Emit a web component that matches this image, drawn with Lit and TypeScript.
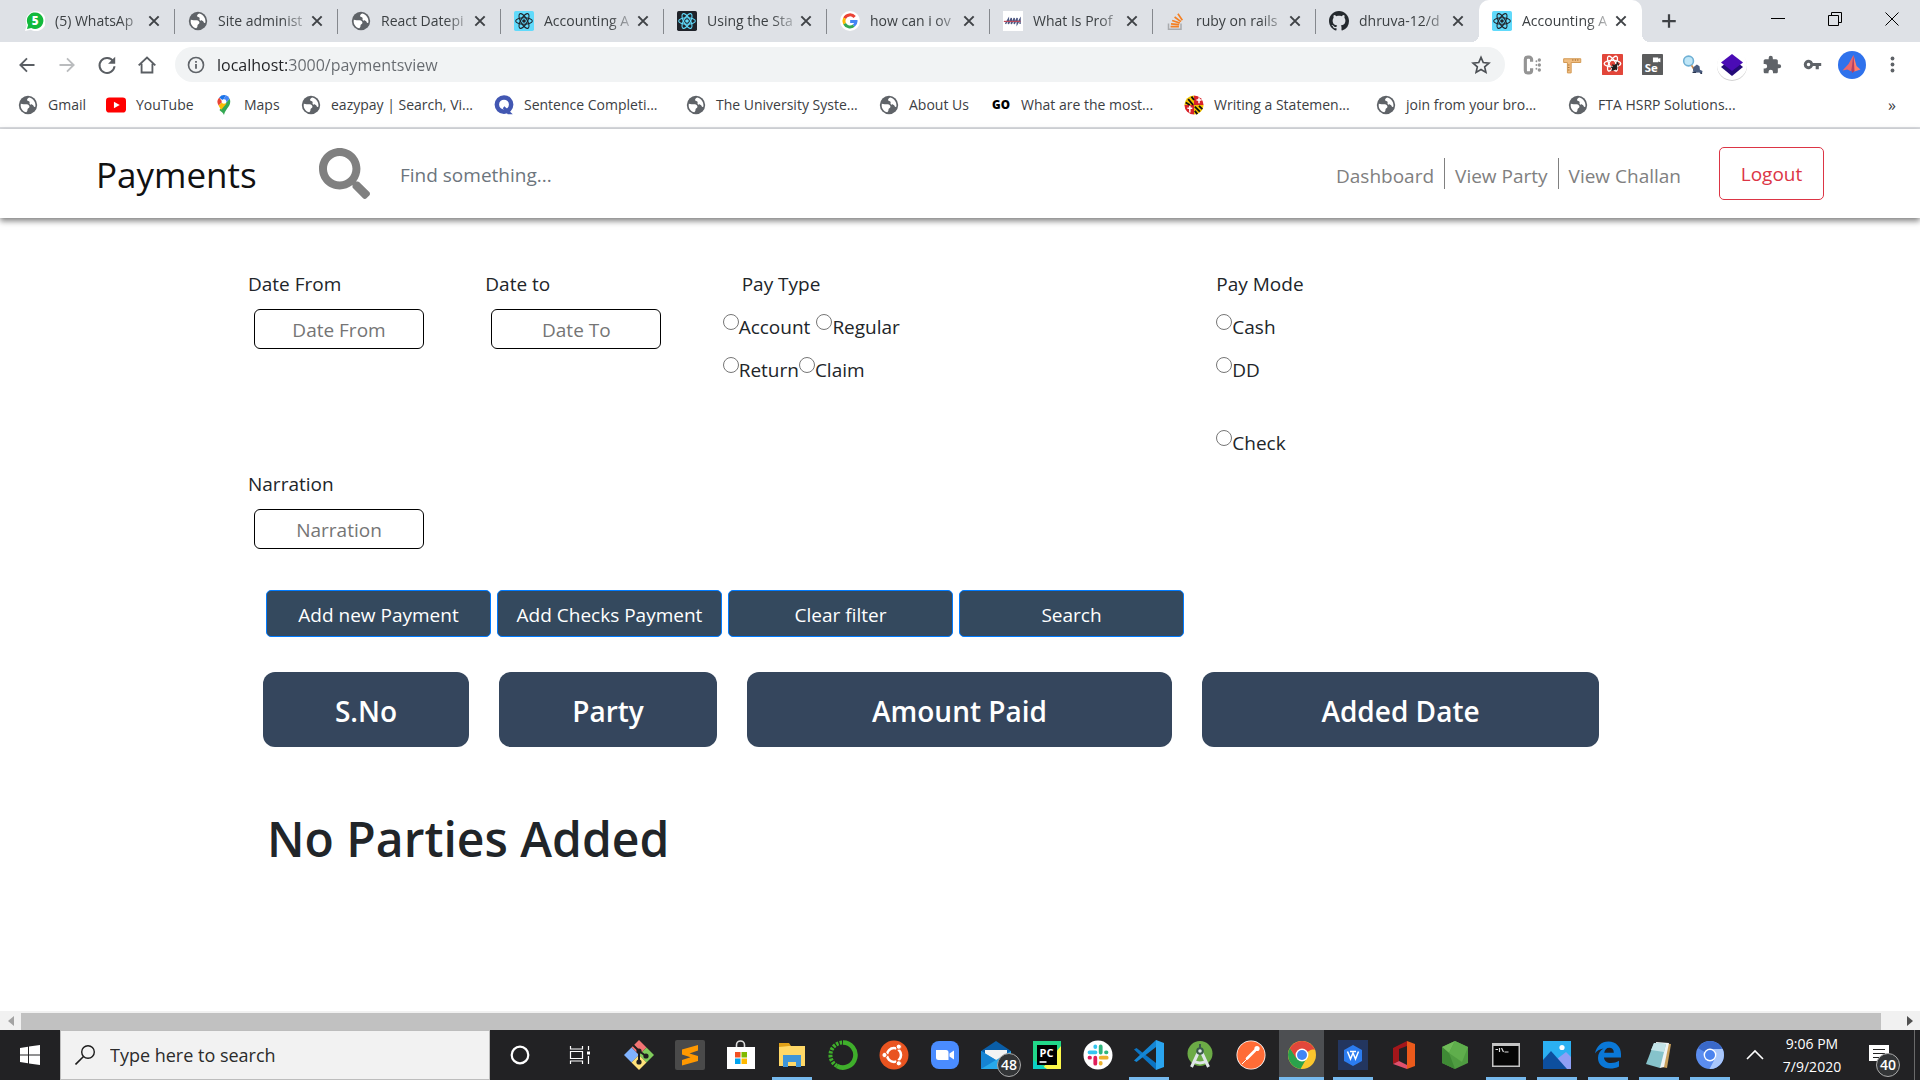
import { LitElement, html, css, svg, nothing, type TemplateResult } from "lit";
import { customElement } from "lit/decorators.js";
import { classMap } from "lit/directives/class-map.js";

type Art = { box?: number; body: unknown };

const reactArt = (bg: string, fg: string, core: string): Art => ({
  body: svg`<rect width="24" height="24" rx="2" fill=${bg}/>
    <g fill="none" stroke=${fg} stroke-width="1.3">
      <ellipse cx="12" cy="12" rx="10" ry="3.9"/>
      <ellipse cx="12" cy="12" rx="10" ry="3.9" transform="rotate(60 12 12)"/>
      <ellipse cx="12" cy="12" rx="10" ry="3.9" transform="rotate(120 12 12)"/>
    </g><circle cx="12" cy="12" r="2.2" fill=${core}/>`,
});

const art: Record<string, Art> = {
  globe: {
    body: svg`<circle cx="12" cy="12" r="11" fill="#5f6368"/>
      <path fill="#fff" d="M3.4 10.6c2.4.9 4.6.2 7 .6 2.2.4 3.600 1.500 3.300 3.200-.3 1.500-2.200 1.600-2.300 3.100 0 1.300-.2 2.300-1.400 3.300-4-1-6.900-4.500-6.800-8.600z"/>
      <path fill="#fff" d="M13.500 2.900c-1.800 1-2.900 1.800-2.600 3.200.3 1.500 2.300.9 2.900 2 .6 1.200-.5 2 .4 3 1.100 1 2.600.2 3.700 1 .9.700.7 2 1.700 2.300.6.1 1.100-.2 1.300-.6.700-4.600-2.300-9.600-7.400-10.900z"/>`,
  },
  whatsapp: {
    body: svg`<path fill="#fff" d="M0 24l2-7A12 12 0 1 1 7 22.600z"/><path fill="#12b93c" d="M2.300 21.700l1.400-5A9.900 9.900 0 1 1 7.500 20.300z"/>
      <text x="12.300" y="17" font-size="14" font-weight="800" font-family="Open Sans, sans-serif" fill="#fff" text-anchor="middle">5</text>`,
  },
  react: reactArt("#61dafb", "#20232a", "#20232a"),
  reactDark: reactArt("#20232a", "#61dafb", "#61dafb"),
  google: {
    body: svg`<circle cx="12" cy="12" r="12" fill="#fff"/><g fill="none" stroke-width="3.600">
      <path stroke="#ea4335" d="M17.600 7.200A7.300 7.300 0 0 0 5.500 8.700"/><path stroke="#fbbc05" d="M5.500 8.700a7.300 7.300 0 0 0 0 6.600"/>
      <path stroke="#34a853" d="M5.500 15.300a7.300 7.300 0 0 0 11 2.300"/><path stroke="#4285f4" d="M16.500 17.600c1.900-1.500 2.700-3.300 2.700-5.100H12.200"/></g>`,
  },
  hills: {
    body: svg`<rect width="24" height="24" fill="#fff"/><g fill="none" stroke="#4a5580" stroke-width="1.600"><path d="M3 15.500l3.500-6v6l3.500-7v7l3.500-7v7l3.500-7v7l3.500-6v6"/></g><path d="M1 12.500h20" stroke="#bb4a5c" stroke-width="1.400"/>`,
  },
  stack: {
    body: svg`<path d="M3 15v7h15v-7" fill="none" stroke="#a9abae" stroke-width="1.800"/>
      <g stroke="#f48024" stroke-width="2"><path d="M5.500 18.800h10M6 15.400l9.800 1M7.400 11.300l9.200 3.200M10.300 7.200l7.600 5.600M14.300 3.200l5.300 7.800"/></g>`,
  },
  github: {
    box: 16,
    body: svg`<path fill="#24292e" fill-rule="evenodd" d="M8 0C3.580 0 0 3.580 0 8c0 3.540 2.290 6.530 5.470 7.590.4.070.55-.17.55-.38 0-.19-.01-.82-.01-1.490-2.010.37-2.530-.49-2.690-.94-.09-.23-.48-.94-.82-1.130-.28-.15-.68-.52-.01-.53.63-.01 1.080.58 1.230.82.72 1.210 1.870.87 2.330.66.07-.52.28-.87.51-1.070-1.780-.2-3.640-.89-3.640-3.950 0-.87.31-1.590.82-2.150-.08-.2-.36-1.020.08-2.120 0 0 .67-.21 2.200.82.64-.18 1.320-.27 2-.27s1.360.09 2 .27c1.530-1.040 2.200-.82 2.200-.82.44 1.100.16 1.920.08 2.120.51.56.82 1.270.82 2.150 0 3.070-1.870 3.750-3.650 3.950.29.25.54.73.54 1.480 0 1.070-.01 1.930-.01 2.200 0 .21.15.46.55.38A8.010 8.010 0 0 0 16 8c0-4.420-3.580-8-8-8z"/>`,
  },
  youtube: { body: svg`<rect y="3" width="24" height="18" rx="4" fill="#f00"/><path fill="#fff" d="M9.500 8v8l7-4z"/>` },
  maps: {
    body: svg`<path fill="#34a853" d="M12 24c.8-3.500 2-5 4-8 1.500-2.200 3.500-4.400 3.500-8.200 0-1.300-.3-2.400-.8-3.400L6.500 18c2 2.500 4.600 2.800 5.500 6z"/>
      <path fill="#fbbc04" d="M5.500 12.500c.7 1.800 2 3.500 3.200 5.200l6.300-7.400-5-2z"/><path fill="#ea4335" d="M6.300 3A7.700 7.700 0 0 0 5.500 12.500L10 8z"/>
      <path fill="#1a73e8" d="M6.300 3l4.300 3.600L14.300.400A7.600 7.600 0 0 0 6.300 3z"/><path fill="#4285f4" d="M14.300.400a7.500 7.500 0 0 1 4.400 4L14.700 9 10.600 6.600z"/><circle cx="12" cy="7.800" r="2.800" fill="#fff"/>`,
  },
  quill: { body: svg`<circle cx="12" cy="11.500" r="8.600" fill="none" stroke="#4257b2" stroke-width="5.400"/><path d="M12.500 13.500l10 9.500h-6l-6-7z" fill="#4257b2"/>` },
  go: { body: svg`<text x="12" y="17" font-size="14" font-weight="900" font-family="Open Sans, sans-serif" fill="#000" text-anchor="middle">GO</text>` },
  maryland: {
    body: svg`<circle cx="12" cy="12" r="11.500" fill="#fff"/><path fill="#f5c400" d="M12 .5A11.500 11.500 0 0 0 .5 12H12z"/><path fill="#d8232a" d="M12 .5A11.500 11.500 0 0 1 23.500 12H12z"/>
      <path fill="#d8232a" d="M12 23.500A11.500 11.500 0 0 1 .5 12H12z"/><path fill="#f5c400" d="M12 23.500A11.500 11.500 0 0 0 23.500 12H12z"/>
      <path stroke="#111" stroke-width="2.200" d="M5 5l6 7M9 2l3 4M2 9l5 3M13 14l6 6M13 19l3 4M18 13l4 4"/><path stroke="#fff" stroke-width="1.800" d="M15 6h6M18 3v7M4 16h6M7 13v8"/>`,
  },
  back: { body: svg`<path d="M21 12H4M12 4l-8 8 8 8" fill="none" stroke="#5a5e63" stroke-width="2.200"/>` },
  forward: { body: svg`<path d="M3 12h17M12 4l8 8-8 8" fill="none" stroke="#babcbe" stroke-width="2.200"/>` },
  reload: { body: svg`<path d="M19.500 7.500A9 9 0 1 0 21 13.500" fill="none" stroke="#5a5e63" stroke-width="2.400"/><path d="M21.800 2v8.500h-8.500z" fill="#5a5e63"/>` },
  home: { body: svg`<path d="M2 12.500L12 3l10 9.500M5.500 10.500V21h13V10.500" fill="none" stroke="#5a5e63" stroke-width="2.200"/>` },
  info: { body: svg`<circle cx="12" cy="12" r="10" fill="none" stroke="#5f6368" stroke-width="2.200"/><path d="M12 10.500V17M12 6.500v2.400" stroke="#5f6368" stroke-width="2.400"/>` },
  star: { body: svg`<path d="M12 2.800l2.700 6.300 6.800.6-5.100 4.500 1.500 6.700-5.900-3.500-5.900 3.500 1.500-6.700-5.100-4.500 6.800-.6z" fill="none" stroke="#4c5055" stroke-width="2"/>` },
  cbracket: {
    body: svg`<path d="M11.500 8V5.500A3 3 0 0 0 8.500 2.500H7a3 3 0 0 0-3 3V18.500a3 3 0 0 0 3 3h1.500a3 3 0 0 0 3-3V16" fill="none" stroke="#949494" stroke-width="3.800"/>
      <g fill="#949494"><circle cx="17.300" cy="7.500" r="1.100"/><circle cx="17.300" cy="12" r="1.100"/><circle cx="17.300" cy="16.500" r="1.100"/><circle cx="20.800" cy="6" r="2"/><circle cx="20.800" cy="12" r="2"/><circle cx="20.800" cy="18" r="2"/></g>`,
  },
  ruler: { body: svg`<path d="M2 4.500h20.500v4.500H11v12.500H6.500V9H2z" fill="#f0bd80" stroke="#d39a55" stroke-width="1.200"/><path d="M13 5v2M16 5v2M19 5v2M7 12h2M7 15h2M7 18h2" stroke="#a0682a"/>` },
  reactRed: {
    body: svg`<rect width="24" height="24" rx="1" fill="#e2463a"/><g fill="none" stroke="#fff" stroke-width="1.500"><ellipse cx="12" cy="11" rx="9.500" ry="3.700"/><ellipse cx="12" cy="11" rx="9.500" ry="3.700" transform="rotate(60 12 11)"/><ellipse cx="12" cy="11" rx="9.500" ry="3.700" transform="rotate(120 12 11)"/></g>
      <path d="M11 19l6-8M12 12l5 6M17 9l2 4M10 15l8 1" stroke="#1d1d1d" stroke-width="1.400"/><ellipse cx="14.500" cy="15" rx="2.200" ry="4" transform="rotate(35 14 15)" fill="#1d1d1d"/>`,
  },
  selenium: {
    body: svg`<rect width="24" height="24" rx="1" fill="#5b5c5d"/><path fill="#fff" d="M12.500 4h6v1.500l2.500-1v5l-2.500-1V9.500h-6z"/>
      <text x="10.500" y="21" font-size="13" font-weight="700" font-family="Open Sans, sans-serif" fill="#fff" text-anchor="middle">Se</text>`,
  },
  magnifier: {
    body: svg`<circle cx="7.500" cy="8" r="5.600" fill="#bfe6f7" stroke="#6fb0d4" stroke-width="1.800"/><path d="M11 13l3 5" stroke="#ca8b50" stroke-width="2"/><path d="M13 15l4-3 3 2 .5 4 3 1.500-1 3-3-1.500-6 .5-1-3z" fill="#4a5d80"/><path d="M12 21h4M21 22h2" stroke="#2b3650" stroke-width="1.600"/>`,
  },
  layers: {
    box: 32,
    body: svg`<circle cx="16" cy="17" r="15" fill="#d3d3d3"/><circle cx="16" cy="16" r="15" fill="#fff"/><path fill="#240b78" d="M16 9l11 9-11 9-11-9z"/><path fill="#4a0bb5" d="M16 5l11 8.500-11 8.500-11-8.500z"/>`,
  },
  puzzle: { body: svg`<path fill="#5f6368" d="M20.500 11H19V7c0-1.100-.9-2-2-2h-4V3.500a2.500 2.500 0 0 0-5 0V5H4c-1.100 0-2 .9-2 2v3.800h1.500a2.700 2.700 0 0 1 0 5.400H2V20c0 1.100.9 2 2 2h3.800v-1.500a2.700 2.700 0 0 1 5.400 0V22H17c1.100 0 2-.9 2-2v-4h1.500a2.500 2.500 0 0 0 0-5z"/>` },
  key: { body: svg`<path fill="#5f6368" fill-rule="evenodd" d="M12.600 10A6 6 0 1 0 12.600 14H16v4h4v-4h3v-4zM7 14.200a2.200 2.200 0 1 1 0-4.400 2.200 2.200 0 0 1 0 4.400z"/>` },
  profile: {
    box: 28,
    body: svg`<circle cx="14" cy="14" r="14" fill="#2f72ec"/><path fill="#ff7d6c" d="M15.500 4l3 11 4 3.500-6 2-3-2z"/><path fill="#e9686c" d="M15.500 4l-5 9-6 6.500 5-1 4 2z"/><path fill="#b33f63" d="M15.500 4l-2 14.500.5 3.500 2.500-2z"/>`,
  },
  menu: { body: svg`<g fill="#5f6368"><circle cx="12" cy="3.500" r="2.700"/><circle cx="12" cy="12" r="2.700"/><circle cx="12" cy="20.500" r="2.700"/></g>` },
  close: { body: svg`<path d="M4 4l16 16M20 4L4 20" stroke="#3f4246" stroke-width="3.400"/>` },
  plus: { body: svg`<path d="M12 3v18M3 12h18" stroke="#3f4246" stroke-width="3"/>` },
  min: { box: 14, body: svg`<path d="M0 6.500h14" stroke="#000"/>` },
  restore: { box: 14, body: svg`<path d="M.5 3.500h10v10H.5zM3.500 3.500v-3h10v10h-3" fill="none" stroke="#000"/>` },
  winClose: { box: 14, body: svg`<path d="M.5.5l13 13M13.500.5L.5 13.500" stroke="#000"/>` },
  find: { box: 512, body: svg`<path fill="#808080" d="M505 442.700L405.300 343c-4.500-4.500-10.600-7-17-7H372c27.600-35.300 44-79.700 44-128C416 93.100 322.900 0 208 0S0 93.100 0 208s93.100 208 208 208c48.300 0 92.700-16.400 128-44v16.300c0 6.400 2.500 12.500 7 17l99.700 99.700c9.400 9.400 24.600 9.400 33.900 0l28.300-28.300c9.400-9.400 9.400-24.600.1-34zM208 336c-70.700 0-128-57.200-128-128 0-70.700 57.200-128 128-128 70.700 0 128 57.200 128 128 0 70.700-57.200 128-128 128z"/>` },
  windows: { box: 20, body: svg`<path fill="#fff" d="M0 3l8-1.200V9.600H0zM9 1.600L20 0v9.600H9zM0 10.500h8v7.700L0 17zM9 10.500h11V20L9 18.400z"/>` },
  lens: { box: 20, body: svg`<circle cx="13" cy="7" r="6.300" fill="none" stroke="#1c1c1c" stroke-width="1.400"/><path d="M8.500 11.500L.5 19.500" stroke="#1c1c1c" stroke-width="1.600"/>` },
  cortana: { box: 30, body: svg`<circle cx="15" cy="15" r="8.300" fill="none" stroke="#fff" stroke-width="2.200"/>` },
  taskview: { box: 30, body: svg`<path d="M5.500 6v3h12V6M5.500 24v-3h12v3M5.500 11.500h12v7h-12zM23.500 6v4M23.500 16v8" fill="none" stroke="#fff" stroke-width="1.200"/><path d="M22 11.500h3v3h-3z" fill="#fff"/>` },
  git: {
    box: 30,
    body: svg`<path fill="#f27474" d="M15 0l7.500 7.500L15 15 7.500 7.500z"/><path fill="#80b3ff" d="M7.500 7.500L15 15l-7.500 7.500L0 15z"/><path fill="#80cc5c" d="M22.500 7.500L30 15l-7.500 7.500L15 15z"/><path fill="#ffe27a" d="M15 15l7.500 7.500L15 30l-7.500-7.500z"/>
      <path d="M9 5l6 6v11M15 11l7 5" stroke="#1f1f1f" stroke-width="2" fill="none"/><g fill="#1f1f1f"><circle cx="15" cy="11" r="2.600"/><circle cx="15" cy="22" r="2.600"/><circle cx="22" cy="16" r="2.600"/></g>`,
  },
  sublime: { box: 30, body: svg`<rect width="30" height="30" rx="2" fill="#4a4a4a"/><path fill="#ff9800" d="M7 9.500L23 5v5.500l-8.500 3L23 16v5L7 25.500V20l8.500-2.800L7 14.500z"/>` },
  store: {
    box: 30,
    body: svg`<path d="M10.500 8V5a4 4 0 0 1 8 0v3" fill="none" stroke="#ddd" stroke-width="1.600"/><path fill="#fff" d="M1 7h28v22H1z"/>
      <path fill="#f25022" d="M9 12h5.500v5.500H9z"/><path fill="#7fba00" d="M15.500 12H21v5.500h-5.500z"/><path fill="#00a4ef" d="M9 18.500h5.500V24H9z"/><path fill="#ffb900" d="M15.500 18.500H21V24h-5.500z"/>`,
  },
  explorer: { box: 30, body: svg`<path fill="#dfa018" d="M2 3h10l2 3v3H2z"/><path fill="#ffd867" d="M2 7l10-1h16v20H2z"/><path fill="#3f95d8" d="M6 15h18v12h-5v-5h-8v5H6z"/>` },
  anaconda: {
    box: 30,
    body: svg`<path d="M15 2.500a12.500 12.500 0 1 1-6 23.500" fill="none" stroke="#3faf2b" stroke-width="4.600"/><path d="M9 26A12.500 12.500 0 0 1 15 2.500" fill="none" stroke="#3faf2b" stroke-width="4" stroke-dasharray="2.500 1.200"/>`,
  },
  ubuntu: {
    box: 30,
    body: svg`<circle cx="15" cy="15" r="14.500" fill="#e95420"/><circle cx="15" cy="15" r="7" fill="none" stroke="#fff" stroke-width="2.600"/><path stroke="#e95420" stroke-width="1.600" d="M15 15L5 15M15 15l5-9M15 15l5 9"/>
      <g fill="#fff" stroke="#e95420" stroke-width="1"><circle cx="5.500" cy="15" r="2.600"/><circle cx="19.800" cy="6.700" r="2.600"/><circle cx="19.800" cy="23.300" r="2.600"/></g>`,
  },
  zoom: { box: 30, body: svg`<rect x="1" y="1" width="28" height="28" rx="8" fill="#4a8cff"/><path fill="#fff" d="M6 10h10a2.500 2.500 0 0 1 2.500 2.500V20h-10A2.500 2.500 0 0 1 6 17.500zM19.500 13.500L24 10.500v9l-4.500-3z"/>` },
  mail: { box: 30, body: svg`<path fill="#0a5ea8" d="M0 11L15 1l15 10v8H0z"/><path fill="#f3f3f3" d="M4 10h22v8L15 22 4 18z"/><path fill="#28a8ea" d="M0 11l15 9 15-9v18H0z"/><path fill="#1683d2" d="M0 11l15 9-15 9z"/>` },
  pycharm: {
    box: 30,
    body: svg`<path fill="#21d789" d="M1 1h28v28H1z"/><path fill="#fcf84a" d="M29 6v23H10z"/><path fill="#0bd0c5" d="M1 20v9h14z"/><path fill="#000" d="M5 5h20v20H5z"/><path stroke="#fff" stroke-width="1.600" d="M7.500 22h7"/>
      <text x="14.500" y="16.500" font-size="11" font-weight="700" font-family="Open Sans, sans-serif" fill="#fff" text-anchor="middle">PC</text>`,
  },
  slack: {
    box: 30,
    body: svg`<circle cx="15" cy="15" r="14.500" fill="#fff"/><g stroke-width="3.800" stroke-linecap="round"><path stroke="#36c5f0" d="M6.500 12.300h6M12.300 6.500v.5"/><path stroke="#2eb67d" d="M17.700 6.500v6M23 12.300h.5"/><path stroke="#ecb22e" d="M17.700 17.700h6M17.700 23v.5"/><path stroke="#e01e5a" d="M12.300 17.700v6M6.500 17.700h.5"/></g>`,
  },
  vscode: { box: 30, body: svg`<path fill="#0b74c2" d="M0 9.500L2.500 8 24 24.500 22 30z"/><path fill="#1486d4" d="M0 20.500L2.500 22 24 5.500 22 0z"/><path fill="#2aa5f0" d="M22 0l8 3v24l-8 3z"/>` },
  android: {
    box: 30,
    body: svg`<circle cx="15" cy="13.500" r="12.500" fill="#6cab46"/><path fill="none" stroke="#dfe5e8" stroke-width="3" d="M14 11L6.500 27M16 11l7.500 16M8 21c4.500 2.500 9.500 2.500 14 0"/><circle cx="15" cy="11" r="3.800" fill="#3a5a4a"/><circle cx="15" cy="11" r="1.800" fill="#dfe5e8"/><path stroke="#3a5a4a" stroke-width="2" d="M15 4v4"/>`,
  },
  postman: { box: 30, body: svg`<circle cx="15" cy="15" r="14.500" fill="#fff"/><circle cx="15" cy="15" r="13.700" fill="#ff6c37"/><path stroke="#fff" stroke-width="2.600" stroke-linecap="round" d="M11 18.500l8-8"/><path stroke="#fff" stroke-width="1" d="M6 24l8-8"/><circle cx="21" cy="8.500" r="2.600" fill="#fff"/>` },
  chrome: {
    box: 30,
    body: svg`<circle cx="15" cy="15" r="14" fill="#fbc62d"/><path fill="#e2473b" d="M15 15L2.900 8A14 14 0 0 1 27.100 8z"/><path fill="#2ba24c" d="M2.900 8A14 14 0 0 0 13.500 28.900L20 17.500 9 17z"/><path fill="#e2473b" d="M2.900 8h24.200L28 9.500H15L9 18z"/><circle cx="15" cy="15" r="6.400" fill="#fff"/><circle cx="15" cy="15" r="5" fill="#4285f4"/>`,
  },
  wps: { box: 30, body: svg`<path fill="#23365f" d="M0 0h30v30H0z"/><path fill="#2b7cf0" d="M15 5l9 5v11l-9 5-9-5V10z"/><path d="M9.500 11.500l3 7.500 2.500-6 2.500 6 3-7.500M12 11.500h6" fill="none" stroke="#fff" stroke-width="1.500"/>` },
  office: { box: 30, body: svg`<path fill="#a4161a" d="M4 8L18 1v5l-8 3v12l-6 3z"/><path fill="#eb5a1b" d="M18 1l8 3v22l-8 3z"/><path fill="#e0506d" d="M4 24l6-3 8 4v4z"/>` },
  node: { box: 30, body: svg`<path fill="#4f9c41" d="M15 1l13 6v16l-13 6L2 23V7z"/><path fill="#6fbb58" d="M15 1L2 7l7 6z"/><path fill="#5fae4c" d="M15 1l13 6-6 15-13-9z"/><path fill="#3f8a35" d="M2 7l7 6 6 16L2 23z"/>` },
  cmd: { box: 30, body: svg`<path fill="#c4c4c4" d="M1 3h28v24H1z"/><path fill="#060606" d="M2.500 6h25v19.500h-25z"/><path d="M4.500 9.500H7M8.500 8v4M10.500 8l2 4M13.500 12h4" stroke="#ddd" stroke-width="1.200"/>` },
  photos: { box: 30, body: svg`<path fill="#2bb0f2" d="M1 1h28v28H1z"/><path fill="#8f9ff5" d="M15 19l9-7 5 5v12H15z"/><path fill="#0d4f9e" d="M1 20l8-9 16 18H1z"/><circle cx="20" cy="7.500" r="2.600" fill="#fff"/>` },
  edge: { box: 30, body: svg`<path fill="#0a78d7" d="M2 13.500C3.500 6 8.500 1.500 15.500 1.500 23 1.500 28 7 28 14v3.500H11c.2 3.500 3 5.500 7 5.500 3 0 5.500-.8 8-2.200v5.700c-2.500 1.400-5.500 2-9 2-7.500 0-12-4.500-12-10.500 0-4 2-7.500 5.500-9.500C6.500 9 3.500 11 2 13.500zM11.200 12.800h9.600c0-3.200-1.600-5-4.600-5-2.700 0-4.500 2-5 5z"/>` },
  notepad: { box: 30, body: svg`<path fill="#c9a05c" d="M12 3l15 1-4 24-5-1z"/><path fill="#f0f4f4" d="M12 2l13 1-5 24-4 1z"/><path fill="#86c3cb" d="M10 3l12 1-6 24-14-4z"/><path fill="#c4e4e8" d="M10 3l12 1-2 8-13-2z"/>` },
  chromium: { box: 30, body: svg`<circle cx="15" cy="15" r="14" fill="#5b8def"/><path fill="#3a69c8" d="M15 15L2.900 8A14 14 0 0 1 27.100 8z"/><path fill="#a9c7fb" d="M27.600 9H15a6 6 0 0 1 5 9.500L14.500 29A14 14 0 0 0 27.600 9z"/><circle cx="15" cy="15" r="6.400" fill="#fff"/><circle cx="15" cy="15" r="5" fill="#4c83ee"/>` },
  chevron: { box: 18, body: svg`<path d="M1 13l8-8 8 8" fill="none" stroke="#fff" stroke-width="1.600"/>` },
  notice: { box: 20, body: svg`<path fill="#fff" d="M0 0h20v16h-6v4l-4-4H0z"/><path d="M4 4.500h12M4 8.500h12M4 12.500h8" stroke="#222" stroke-width="1.200"/>` },
};

const icon = (name: string, size = 20): TemplateResult => {
  const { box = 24, body } = art[name];
  return html`<svg width=${size} height=${size} viewBox="0 0 ${box} ${box}" aria-hidden="true">${body}</svg>`;
};

@customElement("browser-chrome")
export class BrowserChrome extends LitElement {
  static styles = css`
    :host { display: block; font-family: "Open Sans", "Noto Sans", sans-serif; color: #3c4043; background: #fff; border-bottom: 2px solid #dadce0; }
    button, a, input { font: inherit; color: inherit; background: none; border: 0; padding: 0; text-decoration: none; }
    svg { display: block; flex: none; }
    .strip { display: flex; height: 42px; background: #dee1e6; padding-left: 12px; }
    .tab { display: flex; align-items: center; flex: 0 1 163px; box-sizing: border-box; padding-left: 13px; position: relative; }
    .tab.line::after { content: ""; position: absolute; right: 0; top: 9px; height: 25px; width: 1px; background: #85888d; }
    .tab.active { background: #fff; border-radius: 10px 10px 0 0; }
    .tab.active::before, .tab.active::after { content: ""; position: absolute; bottom: 0; width: 8px; height: 8px; }
    .tab.active::before { left: -8px; background: radial-gradient(circle at 0 0, transparent 8px, #fff 8px); }
    .tab.active::after { right: -8px; background: radial-gradient(circle at 100% 0, transparent 8px, #fff 8px); }
    .title { width: 92px; margin-left: 10px; white-space: nowrap; font-size: 14px; line-height: 20px; text-align: left; mask-image: linear-gradient(90deg, #000 70%, rgba(0, 0, 0, 0.1)); }
    .plus { width: 54px; display: grid; place-items: center; }
    .window { display: flex; margin-left: auto; }
    .window button { width: 57px; height: 37px; display: grid; place-items: center; }
    .bar { display: flex; align-items: center; height: 45px; padding-right: 8px; }
    .nav { display: flex; padding: 0 7px; }
    .nav button, .tools button { width: 40px; height: 36px; display: grid; place-items: center; }
    .omni { flex: 1; display: flex; align-items: center; box-sizing: border-box; height: 35px; border-radius: 18px; background: #f1f3f4; padding: 0 14px 0 12px; gap: 12px; margin: 0 7px 0 1px; }
    .url { flex: 1; font-size: 16px; line-height: 24px; height: 24px; outline: 0; color: #5f6368; -webkit-text-fill-color: transparent; background: linear-gradient(90deg, #202124 72px, #666a6f 72px); background-clip: text; -webkit-background-clip: text; }
    .tools { display: flex; }
    .marks { display: grid; grid-template-columns: 88px 108px 87px 193px 192px 193px 112px 193px 192px 192px 1fr auto; align-items: center; height: 36px; padding: 0 24px 4px 18px; font-size: 14px; line-height: 20px; }
    .marks a { display: flex; align-items: center; gap: 10px; white-space: nowrap; }
    .more { font-size: 16px; }
  `;

  private tabs = [
    ["whatsapp", "(5) WhatsAp"], ["globe", "Site administ"], ["globe", "React Datepi"], ["react", "Accounting A"],
    ["reactDark", "Using the Sta"], ["google", "how can i ov"], ["hills", "What Is Prof"], ["stack", "ruby on rails"],
    ["github", "dhruva-12/d"], ["react", "Accounting A"],
  ];
  private marks = [
    ["globe", "Gmail"], ["youtube", "YouTube"], ["maps", "Maps"], ["globe", "eazypay | Search, Vi..."], ["quill", "Sentence Completi..."],
    ["globe", "The University Syste..."], ["globe", "About Us"], ["go", "What are the most..."], ["maryland", "Writing a Statemen..."],
    ["globe", "join from your bro..."], ["globe", "FTA HSRP Solutions..."],
  ];
  private tools: [string, number][] = [
    ["cbracket", 20], ["ruler", 20], ["reactRed", 21], ["selenium", 21], ["magnifier", 21], ["layers", 32], ["puzzle", 20], ["key", 19], ["profile", 28], ["menu", 17],
  ];

  render() {
    const last = this.tabs.length - 1;
    return html`
      <div class="strip">
        ${this.tabs.map(([i, t], n) => html`<div class=${classMap({ tab: true, active: n === last, line: n < last - 1 })}>
          ${icon(i, 20)}<button class="title">${t}</button><button aria-label="Close tab">${icon("close", 14)}</button>
        </div>`)}
        <button class="plus" aria-label="New tab">${icon("plus", 18)}</button>
        <div class="window">
          <button aria-label="Minimize">${icon("min", 14)}</button>
          <button aria-label="Restore">${icon("restore", 14)}</button>
          <button aria-label="Close">${icon("winClose", 14)}</button>
        </div>
      </div>
      <div class="bar">
        <div class="nav">
          ${["back", "forward", "reload", "home"].map((n) => html`<button aria-label=${n}>${icon(n, 20)}</button>`)}
        </div>
        <div class="omni">${icon("info", 18)}<input class="url" aria-label="Address" .value=${"localhost:3000/paymentsview"} />${icon("star", 20)}</div>
        <div class="tools">${this.tools.map(([n, s]) => html`<button aria-label=${n}>${icon(n, s)}</button>`)}</div>
      </div>
      <nav class="marks">
        ${this.marks.map(([i, t]) => html`<a href="#">${icon(i, 20)}<span>${t}</span></a>`)}
        <button class="more" aria-label="More bookmarks">»</button>
      </nav>`;
  }
}

@customElement("payments-page")
export class PaymentsPage extends LitElement {
  static styles = css`
    :host { display: block; background: #fff; color: #212529; font-family: "Open Sans", "Noto Sans", sans-serif; font-size: 19px; line-height: 30px; }
    button, a, input { font: inherit; color: inherit; text-decoration: none; box-sizing: border-box; }
    header { display: flex; align-items: center; height: 89px; padding: 2px 96px 0; box-sizing: border-box; box-shadow: 0 3px 6px rgba(0, 0, 0, 0.5); }
    .brand { margin: 0; width: 223px; font-size: 35px; line-height: 48px; font-weight: 400; color: #111; }
    .find { flex: 1; display: flex; align-items: center; gap: 30px; }
    .find svg { flex: none; margin-bottom: 2px; }
    .find input { flex: 1; border: 0; outline: 0; padding: 0; background: none; }
    .find input::placeholder { color: #6c757d; opacity: 1; }
    .links { display: flex; color: #808080; margin-bottom: 2px; }
    .links a { padding: 0 10px; line-height: 36px; height: 31px; }
    .links a + a { border-left: 1px solid #808080; }
    .logout { width: 105px; height: 53px; margin-left: 28px; margin-bottom: 2px; background: #fff; border: 1px solid #dc3545; border-radius: 5px; color: #dc3545; padding: 0; }
    form { display: grid; grid-template-columns: repeat(6, 1fr); row-gap: 11px; padding: 51px 248px 0; }
    .field { display: flex; flex-direction: column; align-items: flex-start; gap: 10px; }
    .field input { width: 170px; height: 40px; margin-left: 6px; padding: 2px 0 0; border: 1px solid #000; border-radius: 6px; text-align: center; outline: 0; }
    .field input::placeholder { color: #757575; opacity: 1; }
    fieldset { grid-column: span 2; border: 0; margin: 0; padding: 0; min-width: 0; display: flex; flex-direction: column; gap: 13px; }
    legend { padding: 0; margin-bottom: 13px; }
    .type legend { padding-left: 19px; }
    .mode { padding-left: 19px; }
    .row { display: flex; }
    .spaced { gap: 6px; }
    .apart { margin-top: 30px; }
    .row label { display: flex; align-items: flex-start; }
    .row input { appearance: none; width: 16px; height: 16px; margin: 2px 0 0; border: 1px solid #767676; border-radius: 50%; }
    .row input:checked { border: 5px solid #0075ff; }
    .actions { display: flex; gap: 6px; padding: 41px 266px 0; }
    .actions button { width: 225px; height: 47px; border: 1px solid #007bff; border-radius: 5px; background: #34495e; color: #fff; padding: 2px 0 0; }
    .wrap { padding: 5px 291px 0 233px; }
    table { width: 100%; table-layout: fixed; border-collapse: separate; border-spacing: 30px; }
    .c1 { width: 206px; } .c2 { width: 218px; } .c3 { width: 425px; }
    th { height: 75px; box-sizing: border-box; padding: 2px 0 0; background: #35465d; color: #fff; border-radius: 12px; font-size: 28px; line-height: 40px; font-weight: 600; }
    h1 { margin: 0; padding: 32px 34px 0; font-size: 48px; line-height: 60px; font-weight: 600; }
  `;

  private radio(group: string, name: string) {
    return html`<label><input type="radio" name=${group} value=${name} />${name}</label>`;
  }

  private field(id: string, label: string, hint: string) {
    return html`<div class="field"><label for=${id}>${label}</label><input id=${id} placeholder=${hint} /></div>`;
  }

  render() {
    return html`
      <header>
        <h2 class="brand">Payments</h2>
        <label class="find">${icon("find", 51)}<input aria-label="Find something" placeholder="Find something..." /></label>
        <nav class="links"><a href="#">Dashboard</a><a href="#">View Party</a><a href="#">View Challan</a></nav>
        <button class="logout">Logout</button>
      </header>
      <form>
        ${this.field("from", "Date From", "Date From")}
        ${this.field("to", "Date to", "Date To")}
        <fieldset class="type">
          <legend>Pay Type</legend>
          <div class="row spaced">${this.radio("type", "Account")}${this.radio("type", "Regular")}</div>
          <div class="row">${this.radio("type", "Return")}${this.radio("type", "Claim")}</div>
        </fieldset>
        <fieldset class="mode">
          <legend>Pay Mode</legend>
          <div class="row">${this.radio("mode", "Cash")}</div>
          <div class="row">${this.radio("mode", "DD")}</div>
          <div class="row apart">${this.radio("mode", "Check")}</div>
        </fieldset>
        ${this.field("narration", "Narration", "Narration")}
      </form>
      <div class="actions">
        ${["Add new Payment", "Add Checks Payment", "Clear filter", "Search"].map((t) => html`<button type="button">${t}</button>`)}
      </div>
      <div class="wrap">
        <table>
          <colgroup><col class="c1" /><col class="c2" /><col class="c3" /><col /></colgroup>
          <thead><tr>${["S.No", "Party", "Amount Paid", "Added Date"].map((t) => html`<th scope="col">${t}</th>`)}</tr></thead>
        </table>
        <h1>No Parties Added</h1>
      </div>`;
  }
}

@customElement("task-bar")
export class TaskBar extends LitElement {
  static styles = css`
    :host { display: flex; height: 50px; background: #222224; color: #fff; font-family: "Open Sans", "Noto Sans", sans-serif; }
    button, input { font: inherit; color: inherit; background: none; border: 0; padding: 0; }
    svg { display: block; flex: none; }
    button { display: grid; place-items: center; position: relative; height: 50px; }
    .start { width: 60px; }
    .search { display: flex; align-items: center; gap: 15px; width: 430px; box-sizing: border-box; padding: 0 14px; background: #f2f2f2; border: 1px solid #bdbdbd; color: #2b2b2b; }
    .search input { flex: 1; min-width: 0; outline: 0; font-size: 18px; line-height: 28px; }
    .search input::placeholder { color: #2b2b2b; opacity: 1; }
    .wide { width: 60px; }
    .apps { display: flex; padding-left: 3px; }
    .app { width: 51px; }
    .app.open::after { content: ""; position: absolute; left: 6px; right: 5px; bottom: 0; height: 3px; background: #76b9ed; }
    .app.current { background: linear-gradient(90deg, transparent 3px, #4d4f52 3px, #4d4f52 48px, transparent 48px); }
    .app.current::after { left: 3px; right: 3px; }
    .badge { position: absolute; right: 0; bottom: 3px; width: 24px; height: 24px; box-sizing: border-box; border: 1px solid #aaa; border-radius: 50%; background: #333537; font-size: 14px; line-height: 22px; text-align: center; font-weight: 600; }
    .tray { display: flex; margin-left: auto; padding-right: 6px; border-right: 1px solid #6a6a6a; margin-right: 5px; }
    .up { width: 38px; }
    .clock { width: 76px; font-size: 14px; line-height: 23px; text-align: center; padding-top: 2px; }
    .notes { width: 58px; }
    .notes .badge { right: 8px; }
  `;

  private apps: [string, string?][] = [
    ["git"], ["sublime"], ["store"], ["explorer", "open"], ["anaconda"], ["ubuntu"], ["zoom"], ["mail"], ["pycharm"], ["slack"],
    ["vscode", "open"], ["android"], ["postman"], ["chrome", "current"], ["wps", "open"], ["office"], ["node"], ["cmd", "open"],
    ["photos", "open"], ["edge", "open"], ["notepad", "open"], ["chromium", "open"],
  ];

  render() {
    return html`
      <button class="start" aria-label="Start">${icon("windows", 20)}</button>
      <label class="search">${icon("lens", 20)}<input aria-label="Type here to search" placeholder="Type here to search" /></label>
      <button class="wide" aria-label="Cortana">${icon("cortana", 30)}</button>
      <button class="wide" aria-label="Task view">${icon("taskview", 30)}</button>
      <div class="apps">
        ${this.apps.map(([n, s]) => html`<button aria-label=${n} class=${classMap({ app: true, open: !!s, current: s === "current" })}>
          ${icon(n, 30)}${n === "mail" ? html`<span class="badge">48</span>` : nothing}</button>`)}
      </div>
      <div class="tray">
        <button class="up" aria-label="Show hidden icons">${icon("chevron", 18)}</button>
        <div class="clock">9:06 PM<br />7/9/2020</div>
        <button class="notes" aria-label="Notifications">${icon("notice", 20)}<span class="badge">40</span></button>
      </div>`;
  }
}

@customElement("app-root")
export class AppRoot extends LitElement {
  static styles = css`
    :host { display: flex; flex-direction: column; min-height: 100vh; background: #fff; }
    .page { flex: 1; }
    .scroll { display: flex; align-items: center; height: 19px; background: #f1f1f1; }
    .arrow { width: 21px; display: grid; place-items: center; }
    .arrow.right { width: 39px; padding-left: 18px; box-sizing: border-box; }
    .thumb { flex: 1; height: 17px; align-self: flex-end; background: #c1c1c1; }
  `;

  render() {
    return html`
      <browser-chrome></browser-chrome>
      <payments-page class="page"></payments-page>
      <div class="scroll">
        <span class="arrow"><svg width="6" height="10" viewBox="0 0 6 10"><path d="M6 0v10L0 5z" fill="#a3a3a3" /></svg></span>
        <span class="thumb"></span>
        <span class="arrow right"><svg width="6" height="10" viewBox="0 0 6 10"><path d="M0 0v10l6-5z" fill="#505050" /></svg></span>
      </div>
      <task-bar></task-bar>`;
  }
}
